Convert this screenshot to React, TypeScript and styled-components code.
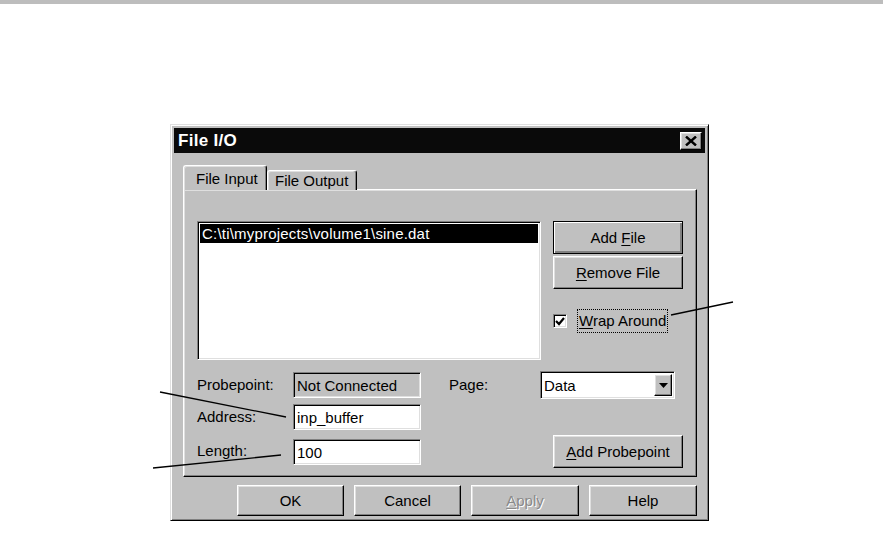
import React from "react";
import styled, { createGlobalStyle, css } from "styled-components";

const Global = createGlobalStyle`
  html, body { margin: 0; padding: 0; background: #ffffff; }
  body { font-family: "Liberation Sans", Arial, sans-serif; color: #000; }
`;

const raised = css`
  border: 1px solid;
  border-color: #ffffff #000000 #000000 #ffffff;
  box-shadow: inset -1px -1px #808080, inset 1px 1px #dfdfdf;
`;

const sunken = css`
  border: 1px solid;
  border-color: #808080 #ffffff #ffffff #808080;
  box-shadow: inset 1px 1px #000000, inset -1px -1px #dfdfdf;
`;

const Page = styled.div`
  position: relative;
  width: 883px;
  height: 535px;
  overflow: hidden;
`;

const TopBar = styled.div`
  height: 4px;
  background: #bdbdbd;
`;

const Stage = styled.div`
  padding: 120px 0 0 170px;
`;

const Dialog = styled.div`
  box-sizing: border-box;
  width: 539px;
  background: #c0c0c0;
  border: 1px solid;
  border-color: #dfdfdf #000000 #000000 #dfdfdf;
  box-shadow: inset 1px 1px #ffffff, inset -1px -1px #808080;
  padding: 3px;
`;

const TitleBar = styled.div`
  height: 25px;
  background: #0a0a0a;
  color: #ffffff;
  display: flex;
  align-items: center;
  justify-content: space-between;
  padding: 0 3px 0 4px;
  font-weight: bold;
  font-size: 17px;
  letter-spacing: 0.3px;
`;

const CloseButton = styled.div`
  box-sizing: border-box;
  width: 22px;
  height: 18px;
  background: #c0c0c0;
  ${raised};
  display: flex;
  align-items: center;
  justify-content: center;
`;

const Body = styled.div`
  padding: 13px 0 0 9px;
  font-size: 15px;
`;

const TabRow = styled.div`
  display: flex;
  align-items: flex-end;
  height: 24px;
  margin-bottom: -1px;
  position: relative;
  z-index: 1;
`;

const Tab = styled.div<{ $active?: boolean; $w: number }>`
  box-sizing: border-box;
  width: ${(p) => p.$w}px;
  height: ${(p) => (p.$active ? 25 : 20)}px;
  background: #c0c0c0;
  border-top: 1px solid #ffffff;
  border-left: 1px solid #ffffff;
  border-right: 1px solid #000000;
  border-radius: 3px 3px 0 0;
  box-shadow: inset -1px 0 #808080, inset 1px 1px #dfdfdf;
  display: flex;
  align-items: ${(p) => (p.$active ? "flex-start" : "center")};
  padding: ${(p) => (p.$active ? "4px 0 0 12px" : "0 0 0 7px")};
  white-space: nowrap;
`;

const Panel = styled.div`
  box-sizing: border-box;
  width: 514px;
  height: 288px;
  ${raised};
  padding: 31px 13px 0 13px;
`;

const TopRow = styled.div`
  display: flex;
  gap: 12px;
`;

const ListBox = styled.div`
  box-sizing: border-box;
  width: 344px;
  height: 139px;
  background: #ffffff;
  ${sunken};
  padding: 2px;
`;

const ListItem = styled.div<{ $selected?: boolean }>`
  height: 19px;
  line-height: 19px;
  padding-left: 2px;
  background: ${(p) => (p.$selected ? "#000000" : "transparent")};
  color: ${(p) => (p.$selected ? "#ffffff" : "#000000")};
  white-space: nowrap;
  letter-spacing: 0.2px;
`;

const ButtonColumn = styled.div`
  width: 130px;
  display: flex;
  flex-direction: column;
  gap: 2px;
`;

const Button = styled.div<{ $w?: number; $h?: number; $default?: boolean; $disabled?: boolean }>`
  box-sizing: border-box;
  width: ${(p) => (p.$w ? `${p.$w}px` : "100%")};
  height: ${(p) => p.$h ?? 33}px;
  background: #c0c0c0;
  ${raised};
  ${(p) =>
    p.$default &&
    css`
      border-color: #000000;
      box-shadow: inset 1px 1px #ffffff, inset -2px -2px #808080;
    `}
  display: flex;
  align-items: center;
  justify-content: center;
  white-space: nowrap;
  color: ${(p) => (p.$disabled ? "#8a8a8a" : "#000000")};
  text-shadow: ${(p) => (p.$disabled ? "1px 1px #ffffff" : "none")};
`;

const U = styled.span`
  text-decoration: underline;
  text-underline-offset: 2px;
`;

const CheckRow = styled.div`
  margin-top: 18px;
  display: flex;
  align-items: center;
  gap: 10px;
`;

const CheckBox = styled.div`
  box-sizing: border-box;
  width: 14px;
  height: 14px;
  background: #ffffff;
  ${sunken};
  display: flex;
  align-items: center;
  justify-content: center;
`;

const FocusLabel = styled.div`
  border: 1px dotted #000000;
  padding: 2px 1px 3px 1px;
  white-space: nowrap;
`;

const FormGrid = styled.div`
  margin-top: 11px;
  display: grid;
  grid-template-columns: 96px 128px 28px 91px 143px;
  grid-template-rows: 28px 26px 33px;
  row-gap: 5px;
  align-items: center;
`;

const Label = styled.div<{ $row: number; $col: number }>`
  grid-row: ${(p) => p.$row};
  grid-column: ${(p) => p.$col};
  white-space: nowrap;
  padding-bottom: 2px;
`;

const Field = styled.div<{ $row: number; $readonly?: boolean }>`
  grid-row: ${(p) => p.$row};
  grid-column: 2;
  box-sizing: border-box;
  height: 26px;
  background: ${(p) => (p.$readonly ? "#c0c0c0" : "#ffffff")};
  ${sunken};
  display: flex;
  align-items: center;
  padding-left: 3px;
  white-space: nowrap;
`;

const Select = styled.div`
  grid-row: 1;
  grid-column: 5;
  box-sizing: border-box;
  width: 135px;
  height: 28px;
  background: #ffffff;
  ${sunken};
  display: flex;
  align-items: center;
  justify-content: space-between;
  padding: 2px 2px 2px 3px;
`;

const DropButton = styled.div`
  box-sizing: border-box;
  width: 18px;
  height: 22px;
  background: #c0c0c0;
  ${raised};
  display: flex;
  align-items: center;
  justify-content: center;
`;

const ProbeButtonCell = styled.div`
  grid-row: 3;
  grid-column: 4 / 6;
  display: flex;
  justify-content: flex-end;
`;

const LengthField = styled(Field)`
  align-self: start;
  margin-top: 4px;
`;

const FooterRow = styled.div`
  display: flex;
  justify-content: flex-end;
  gap: 10px;
  margin-top: 8px;
  padding-right: 8px;
  padding-bottom: 1px;
`;

const Overlay = styled.svg`
  position: absolute;
  left: 0;
  top: 0;
  pointer-events: none;
`;

export default function App() {
  return (
    <Page>
      <Global />
      <TopBar />
      <Stage>
        <Dialog>
          <TitleBar>
            <span>File I/O</span>
            <CloseButton>
              <svg width="12" height="10" viewBox="0 0 12 10">
                <path d="M1 0.5 L11 9.5 M11 0.5 L1 9.5" stroke="#000" strokeWidth="2.4" />
              </svg>
            </CloseButton>
          </TitleBar>
          <Body>
            <TabRow>
              <Tab $active $w={84}>File Input</Tab>
              <Tab $w={90}>File Output</Tab>
            </TabRow>
            <Panel>
              <TopRow>
                <ListBox>
                  <ListItem $selected>C:\ti\myprojects\volume1\sine.dat</ListItem>
                </ListBox>
                <ButtonColumn>
                  <Button $default>
                    Add&nbsp;<U>F</U>ile
                  </Button>
                  <Button>
                    <U>R</U>emove File
                  </Button>
                  <CheckRow>
                    <CheckBox>
                      <svg width="10" height="9" viewBox="0 0 10 9">
                        <path d="M1 4 L4 7 L9 1" stroke="#000" strokeWidth="2.2" fill="none" />
                      </svg>
                    </CheckBox>
                    <FocusLabel>
                      <U>W</U>rap Around
                    </FocusLabel>
                  </CheckRow>
                </ButtonColumn>
              </TopRow>
              <FormGrid>
                <Label $row={1} $col={1}>Probepoint:</Label>
                <Field $row={1} $readonly>Not Connected</Field>
                <Label $row={1} $col={4}>Page:</Label>
                <Select>
                  <span>Data</span>
                  <DropButton>
                    <svg width="9" height="5" viewBox="0 0 9 5">
                      <path d="M0 0 H9 L4.5 5 Z" fill="#000" />
                    </svg>
                  </DropButton>
                </Select>
                <Label $row={2} $col={1}>Address:</Label>
                <Field $row={2}>inp_buffer</Field>
                <Label $row={3} $col={1}>Length:</Label>
                <LengthField $row={3}>100</LengthField>
                <ProbeButtonCell>
                  <Button $w={130} $h={33}>
                    <U>A</U>dd Probepoint
                  </Button>
                </ProbeButtonCell>
              </FormGrid>
            </Panel>
            <FooterRow>
              <Button $w={107} $h={31}>OK</Button>
              <Button $w={107} $h={31}>Cancel</Button>
              <Button $w={108} $h={31} $disabled>
                <U>A</U>pply
              </Button>
              <Button $w={108} $h={31}>Help</Button>
            </FooterRow>
          </Body>
        </Dialog>
      </Stage>
      <Overlay width="883" height="535" viewBox="0 0 883 535">
        <g stroke="#000" strokeWidth="1.3" fill="none">
          <line x1="160" y1="392" x2="286" y2="417" />
          <line x1="153" y1="468" x2="281" y2="455" />
          <line x1="671" y1="315" x2="733" y2="302" />
        </g>
      </Overlay>
    </Page>
  );
}
